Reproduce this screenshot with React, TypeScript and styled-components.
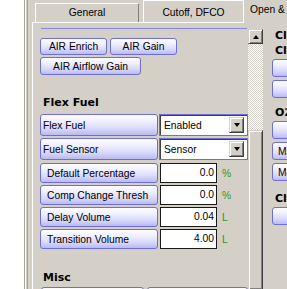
import React from "react";
import styled, { createGlobalStyle } from "styled-components";

const GlobalStyle = createGlobalStyle`
  html, body { margin: 0; padding: 0; background: #ffffff; }
  body { font-family: "Liberation Sans", Arial, sans-serif; }
  #root { width: 287px; height: 289px; }
`;

const Page = styled.div`
  display: flex;
  width: 287px;
  height: 289px;
  overflow: hidden;
  background: #d4d0c8;
  font-family: "Liberation Sans", Arial, sans-serif;
  font-size: 10.3px;
  color: #000;
`;

const Gutter = styled.div`
  width: 24px;
  flex: none;
  background: #ffffff;
`;

const Frame = styled.div`
  width: 8px;
  flex: none;
  box-sizing: border-box;
  background: #d4d0c8;
  border-left: 1px solid #a7a39b;
  box-shadow: inset 1px 0 #ffffff, inset -4px 0 #d4d0c8, inset -5px 0 #a7a39b;
`;

const Main = styled.div`
  flex: 1;
  display: flex;
  flex-direction: column;
  min-width: 0;
`;

const TabStrip = styled.div`
  display: flex;
  height: 23px;
  flex: none;
`;

const TabRow = styled.div`
  display: flex;
  align-items: flex-end;
  gap: 4px;
  width: 212px;
  box-sizing: border-box;
  padding-left: 3px;
  border-bottom: 1px solid #ffffff;
`;

const Tab = styled.div<{ $raised?: boolean; $w: number }>`
  width: ${(p) => p.$w}px;
  height: ${(p) => (p.$raised ? 22 : 19)}px;
  box-sizing: border-box;
  padding-top: ${(p) => (p.$raised ? 3 : 0)}px;
  line-height: 17px;
  text-align: center;
  border-top: 1px solid #ffffff;
  border-left: 1px solid #ffffff;
  border-right: 1px solid ${(p) => (p.$raised ? "#ffffff" : "#808080")};
  white-space: nowrap;
`;

const OpenTab = styled.div`
  padding: 1px 0 0 6px;
  line-height: 17px;
  white-space: nowrap;
  overflow: hidden;
`;

const Body = styled.div`
  flex: 1;
  display: flex;
  border-left: 1px solid #ffffff;
  min-height: 0;
`;

const ScrollView = styled.div`
  width: 215px;
  flex: none;
  overflow: hidden;
  padding: 5px 0 0 7px;
  box-sizing: border-box;
  display: flex;
  flex-direction: column;
`;

const TopRule = styled.div`
  height: 1px;
  width: 206px;
  margin-left: 1px;
  background: #8585df;
  flex: none;
`;

const ButtonWrap = styled.div`
  display: flex;
  flex-wrap: wrap;
  gap: 2px 3px;
  margin-top: 9px;
  width: 150px;
`;

const Btn = styled.div<{ $w: number; $h?: number; $left?: boolean }>`
  width: ${(p) => p.$w}px;
  height: ${(p) => p.$h ?? 17}px;
  flex: none;
  box-sizing: border-box;
  border: 1px solid #6e6ed4;
  border-radius: 3px;
  background: linear-gradient(180deg, #fdfdff 0%, #f1f1ff 30%, #d9d9fb 68%, #babaf2 100%);
  display: flex;
  align-items: center;
  justify-content: ${(p) => (p.$left ? "flex-start" : "center")};
  padding-left: ${(p) => (p.$left ? 5 : 0)}px;
  white-space: nowrap;
  overflow: hidden;
`;

const Heading = styled.div<{ $top: number; $bottom?: number }>`
  font-family: "DejaVu Sans", Verdana, sans-serif;
  font-weight: bold;
  font-size: 11px;
  line-height: 13px;
  height: 13px;
  padding-left: 3px;
  margin-top: ${(p) => p.$top}px;
  margin-bottom: ${(p) => p.$bottom ?? 0}px;
  white-space: nowrap;
  flex: none;
`;

const Rows = styled.div`
  display: flex;
  flex-direction: column;
  gap: 2px;
  margin-top: 5px;
`;

const Row = styled.div<{ $h: number; $extra?: number }>`
  display: flex;
  align-items: center;
  gap: 2px;
  height: ${(p) => p.$h}px;
  margin-top: ${(p) => p.$extra ?? 0}px;
  flex: none;
`;

const Label = styled.div<{ $pad: number }>`
  width: 118px;
  height: 100%;
  box-sizing: border-box;
  border: 1px solid #6e6ed4;
  border-radius: 3px;
  background: linear-gradient(180deg, #fdfdff 0%, #f1f1ff 30%, #d9d9fb 68%, #babaf2 100%);
  display: flex;
  align-items: center;
  padding-left: ${(p) => p.$pad}px;
  white-space: nowrap;
  overflow: hidden;
  flex: none;
`;

const SelectBox = styled.div`
  width: 89px;
  height: 22px;
  margin-left: -1px;
  box-sizing: border-box;
  border: 1px solid #7070d0;
  background: #ffffff;
  box-shadow: inset 1px 1px #404040;
  display: flex;
  align-items: center;
  padding: 0 3px 0 4px;
  flex: none;
`;

const DropButton = styled.div`
  width: 15px;
  height: 16px;
  margin-left: auto;
  box-sizing: border-box;
  background: #d4d0c8;
  border: 1px solid;
  border-color: #d4d0c8 #404040 #404040 #d4d0c8;
  box-shadow: inset 1px 1px #ffffff, inset -1px -1px #808080;
  display: flex;
  align-items: center;
  justify-content: center;
  &::after {
    content: "";
    width: 0;
    height: 0;
    border-left: 3.5px solid transparent;
    border-right: 3.5px solid transparent;
    border-top: 4px solid #000;
  }
`;

const NumBox = styled.div`
  width: 57px;
  height: 20px;
  box-sizing: border-box;
  border: 1px solid #1a1a1a;
  background: #ffffff;
  text-align: right;
  padding-right: 2px;
  line-height: 18px;
  flex: none;
`;

const Unit = styled.div`
  margin-left: 3px;
  color: #2a9a2a;
  width: 10px;
`;

const MiscRow = styled.div`
  display: flex;
  gap: 3px;
  margin-top: 3px;
  padding-left: 1px;
  flex: none;
`;

const ScrollBar = styled.div`
  width: 15px;
  flex: none;
  padding-top: 6px;
  display: flex;
  flex-direction: column;
`;

const Raised = styled.div`
  box-sizing: border-box;
  background: #d4d0c8;
  border: 1px solid;
  border-color: #d4d0c8 #404040 #404040 #d4d0c8;
  box-shadow: inset 1px 1px #ffffff, inset -1px -1px #808080;
`;

const UpButton = styled(Raised)`
  height: 15px;
  flex: none;
  display: flex;
  align-items: center;
  justify-content: center;
  &::after {
    content: "";
    width: 0;
    height: 0;
    border-left: 3.5px solid transparent;
    border-right: 3.5px solid transparent;
    border-bottom: 4px solid #000;
  }
`;

const Track = styled.div`
  height: 86px;
  flex: none;
  background: repeating-conic-gradient(#ffffff 0 25%, #d4d0c8 0 50%) 0 0 / 2px 2px;
`;

const Thumb = styled(Raised)`
  flex: 1;
  border-bottom: none;
`;

const RightCol = styled.div`
  flex: 1;
  min-width: 0;
  overflow: hidden;
  padding: 6px 0 0 9px;
  display: flex;
  flex-direction: column;
`;

const RightBtns = styled.div<{ $top: number }>`
  display: flex;
  flex-direction: column;
  gap: 3px;
  margin-top: ${(p) => p.$top}px;
`;

type Field =
  | { kind: "select"; label: string; value: string }
  | { kind: "num"; label: string; value: string; unit: string };

const fields: Field[] = [
  { kind: "select", label: "Flex Fuel", value: "Enabled" },
  { kind: "select", label: "Fuel Sensor", value: "Sensor" },
  { kind: "num", label: "Default Percentage", value: "0.0", unit: "%" },
  { kind: "num", label: "Comp Change Thresh", value: "0.0", unit: "%" },
  { kind: "num", label: "Delay Volume", value: "0.04", unit: "L" },
  { kind: "num", label: "Transition Volume", value: "4.00", unit: "L" },
];

export default function App() {
  return (
    <>
      <GlobalStyle />
      <Page>
        <Gutter />
        <Frame />
        <Main>
          <TabStrip>
            <TabRow>
              <Tab $w={104}>General</Tab>
              <Tab $w={101} $raised>
                Cutoff, DFCO
              </Tab>
            </TabRow>
            <OpenTab>Open &amp;</OpenTab>
          </TabStrip>
          <Body>
            <ScrollView>
              <TopRule />
              <ButtonWrap>
                <Btn $w={67}>AIR Enrich</Btn>
                <Btn $w={67}>AIR Gain</Btn>
                <Btn $w={101} $h={18}>
                  AIR Airflow Gain
                </Btn>
              </ButtonWrap>
              <Heading $top={21}>Flex Fuel</Heading>
              <Rows>
                {fields.map((f, i) =>
                  f.kind === "select" ? (
                    <Row key={f.label} $h={22}>
                      <Label $pad={2}>{f.label}</Label>
                      <SelectBox>
                        {f.value}
                        <DropButton />
                      </SelectBox>
                    </Row>
                  ) : (
                    <Row key={f.label} $h={20} $extra={i === 2 ? 1 : 0}>
                      <Label $pad={6}>{f.label}</Label>
                      <NumBox>{f.value}</NumBox>
                      <Unit>{f.unit}</Unit>
                    </Row>
                  )
                )}
              </Rows>
              <Heading $top={22}>Misc</Heading>
              <MiscRow>
                <Btn $w={103} $h={20} />
                <Btn $w={101} $h={20} />
              </MiscRow>
            </ScrollView>
            <ScrollBar>
              <UpButton />
              <Track />
              <Thumb />
            </ScrollBar>
            <RightCol>
              <Heading $top={0}>Closed Loop</Heading>
              <Heading $top={2}>Closed</Heading>
              <RightBtns $top={2}>
                <Btn $w={60} $h={18} $left />
                <Btn $w={60} $h={18} $left />
              </RightBtns>
              <Heading $top={8}>O2 Sensor</Heading>
              <RightBtns $top={2}>
                <Btn $w={60} $h={18} $left />
                <Btn $w={60} $h={18} $left>
                  Min
                </Btn>
                <Btn $w={60} $h={18} $left>
                  Max
                </Btn>
              </RightBtns>
              <Heading $top={11}>Closed</Heading>
              <RightBtns $top={2}>
                <Btn $w={60} $h={18} $left />
              </RightBtns>
            </RightCol>
          </Body>
        </Main>
      </Page>
    </>
  );
}
